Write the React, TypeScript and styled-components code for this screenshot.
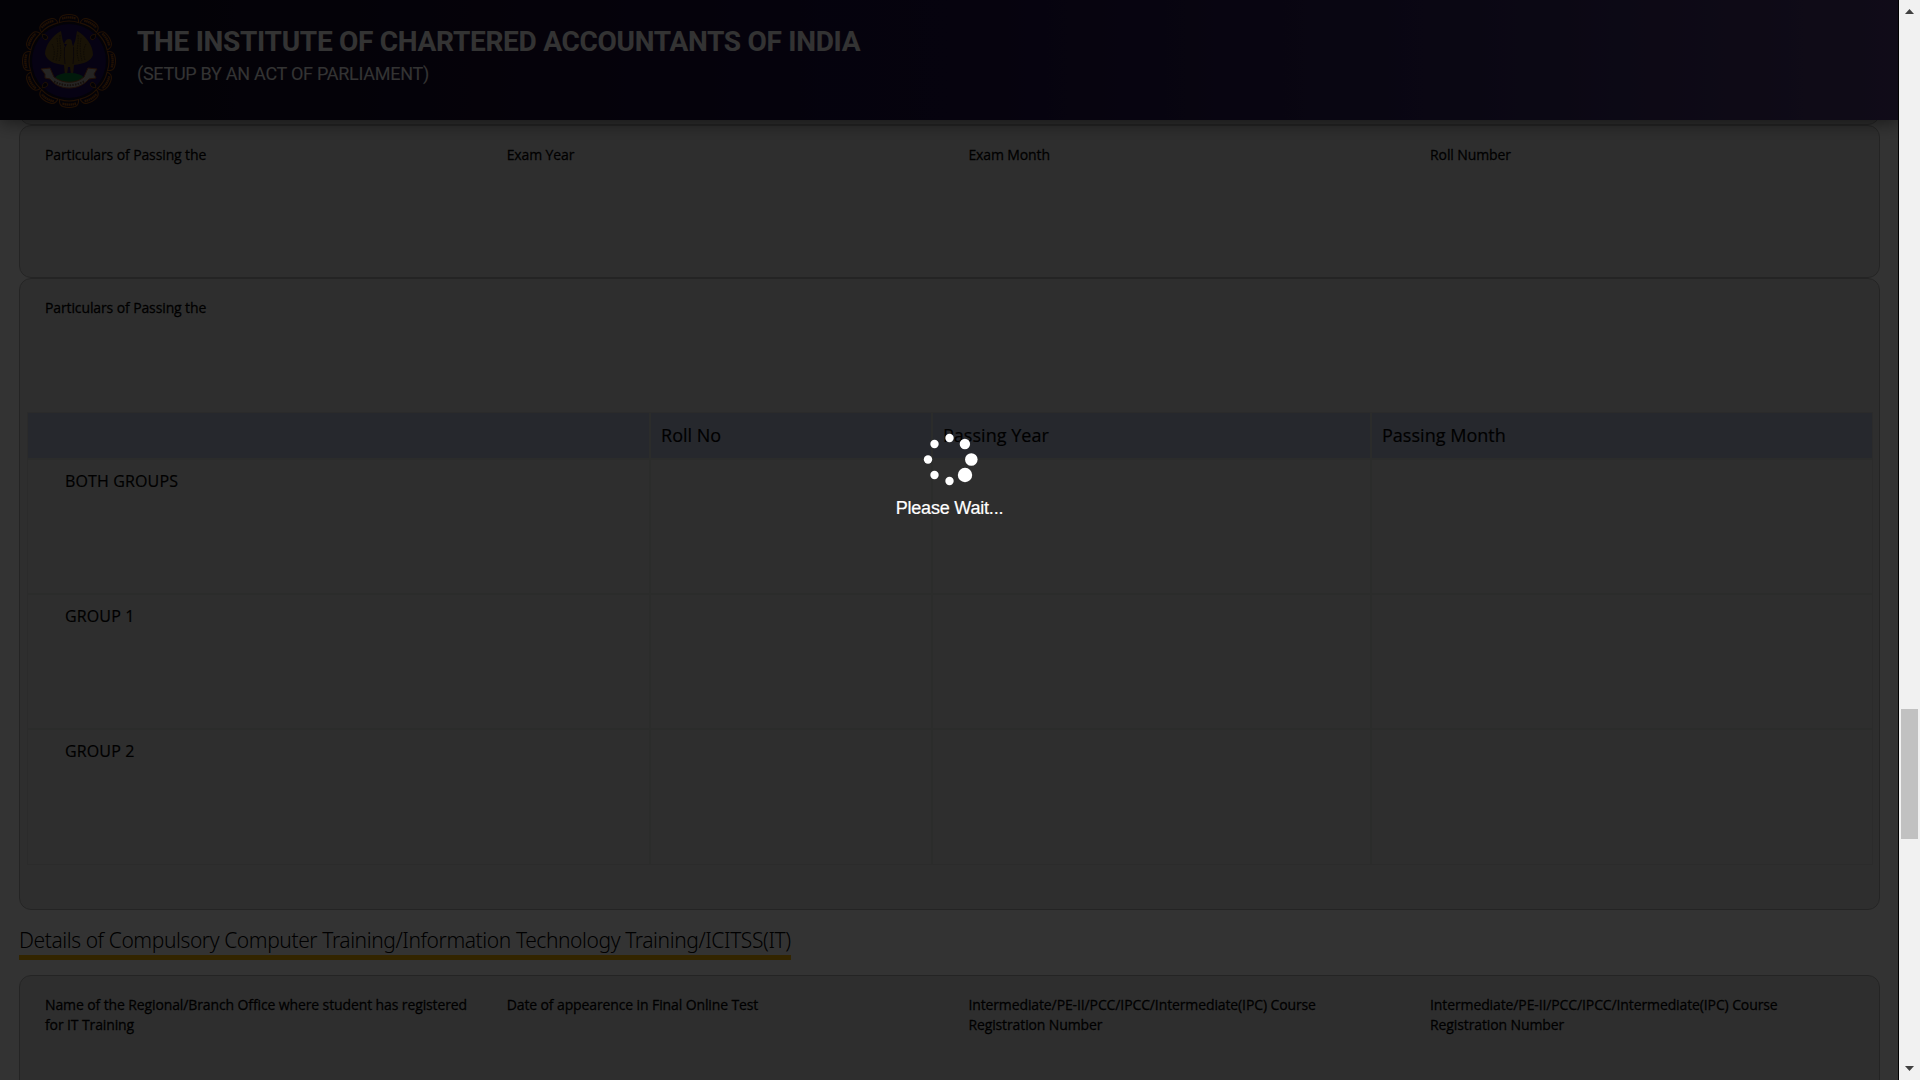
import React from "react";
import styled, { createGlobalStyle } from "styled-components";

const Global = createGlobalStyle`
  *{box-sizing:border-box}
  body{margin:0;background:#fff;overflow:hidden;font-family:"Open Sans","Noto Sans",sans-serif;color:#000}
`;
const Screen = styled.div`display:flex;width:1920px;height:1080px;overflow:hidden;`;
const Page = styled.div`position:relative;width:1899px;height:1080px;overflow:hidden;background:#fff;display:flex;flex-direction:column;border-right:1px solid #000;`;
const Header = styled.header`flex:none;z-index:1;width:1899px;height:120px;padding:13px 21px;display:flex;gap:20px;
  background:linear-gradient(90deg,#0f0a20 0%,#190c30 25%,#1e0f46 50%,#32235f 75%,#503c78 100%);box-shadow:0 2px 18px rgba(0,0,0,.55);`;
const Titles = styled.div`font-family:Roboto,sans-serif;color:#fff;padding-top:13px;`;
const Title = styled.h1`margin:0;font-size:28px;line-height:32px;font-weight:700;white-space:nowrap;letter-spacing:-.285px;`;
const Sub = styled.div`margin-top:5px;font-size:18px;line-height:22px;white-space:nowrap;letter-spacing:-.27px;`;
const Content = styled.main`padding:0 19px;flex:none;`;
const Card = styled.section<{ $h: number }>`height:${p => p.$h}px;border:1px solid #b4b4b4;border-radius:12px;background:#e6e6e6;padding:19px 7px 0;width:1861px;`;
const PreviousCard = styled(Card)`margin-top:-35px;`;
const Fields = styled.div<{ $h?: number }>`display:grid;grid-template-columns:repeat(4,461.7px);padding-left:18px;height:${p => p.$h ?? 60}px;`;
const Label = styled.div`font-size:14px;line-height:20px;letter-spacing:-.115px;-webkit-text-stroke:.28px #000;padding-right:36px;`;
const Table = styled.div`border:1px solid #d4d6d4;width:1846px;`;
const Row = styled.div<{ $head?: boolean }>`display:grid;grid-template-columns:623px 282px 439px 1fr;height:${p => p.$head ? 47 : 135}px;
  background:${p => p.$head ? "#bec8e1" : "transparent"};border-bottom:2px solid #d8dad8;
  &:last-child{border-bottom:0;height:134px}`;
const Cell = styled.div<{ $head?: boolean }>`border-right:2px solid #d8dcd8;padding:${p => p.$head ? "9px 10px" : "9px 37px"};
  font-size:${p => p.$head ? 18 : 16}px;line-height:${p => p.$head ? 27 : 24}px;-webkit-text-stroke:.2px #000;letter-spacing:${p => p.$head ? 0.02 : 0.14}px;
  &:last-child{border-right:0}`;
const Heading = styled.h2`display:block;width:fit-content;margin:15px 0 15px;height:35px;font-family:"Noto Sans","Open Sans",sans-serif;font-size:21px;line-height:30px;font-weight:300;letter-spacing:-.42px;border-bottom:5px solid #ffbb00;white-space:nowrap;`;
const Overlay = styled.div`position:absolute;inset:0;width:1899px;z-index:5;background:rgba(0,0,0,.8);display:flex;flex-direction:column;align-items:center;padding-top:430px;`;
const Wait = styled.div`margin-top:9px;color:#fff;font:18px/26px "Liberation Sans",Arial,sans-serif;letter-spacing:-.2px;-webkit-text-stroke:.2px #fff;`;
const Bar = styled.aside`flex:1;background:#f1f1f1;display:flex;flex-direction:column;align-items:center;`;
const Arrow = styled.svg`display:block;width:21px;height:21px;flex:none;`;
const Thumb = styled.div`width:17px;height:130px;margin-top:688px;margin-bottom:auto;background:#c1c1c1;`;

function Emblem() {
  const petals = Array.from({ length: 12 }, (_, i) => i * 30);
  return (
    <svg width="96" height="96" viewBox="0 0 96 96">
      <circle cx="48" cy="48" r="37" fill="#1e0a5f" />
      {petals.map(a => (
        <g key={a} transform={`rotate(${a} 48 48)`} fill="none" stroke="#a0500f">
          <path d="M38.5 9.5Q38 4 42 2.5Q48 .5 54 2.5Q58 4 57.5 9.5Q48 6.5 38.5 9.5Z" strokeWidth="1.1" />
          <path d="M41 5.5Q48 3.2 55 5.5" strokeWidth="2.4" strokeDasharray="1.6 .4" />
        </g>
      ))}
      {[45, 135, 225, 315].map(a => (
        <path key={a} transform={`rotate(${a} 48 48)`} d="M48 10q-3 3-2 6q2 2 4 0q1-3-2-6z" fill="#0d061a" stroke="#96500f" strokeWidth=".9" />
      ))}
      <g fill="#785a1e">
        <path d="M40 18C32 22 24 32 24 41C26 48 33 51 43 52L44 34Q41 27 40 18Z" />
        <path d="M56 18C64 22 72 32 72 42C70 48 63 51 53 52L52 34Q55 27 56 18Z" />
        <path d="M44 29Q45 26 48 26Q51 26 51 30Q52 34 54 38L53 52L52 62H50L49 54H47L46 62H44L43 52L42 38L46 31L43 31Z" />
      </g>
      <path d="M39 22C38 33 42 38 38 48M57 22C58 33 54 38 58 48M31 31Q35 38 32 47M65 31Q61 38 64 47M36 25Q38 36 35 48M60 25Q58 36 61 48" fill="none" stroke="#3e2c18" strokeWidth="1" strokeDasharray="1.5 1" />
      <path d="M43.5 34Q43 44 44 51M52.5 34Q53 44 52 51" fill="none" stroke="#281837" strokeWidth=".8" />
      <ellipse cx="48.5" cy="65" rx="14" ry="5" fill="#08823a" />
      <path d="M20 56L29 55L33 64C42 71 55 71 63 64L67 55L76 56L73 61L75 65L68 66C58 78 38 78 29 66L24 65L24 61Z" fill="#b8b4b0" stroke="#a05023" />
      <path d="M33 68.5Q48 76 63 68.5" fill="none" stroke="#6e5040" strokeWidth="2" strokeDasharray="1.5 1.2" />
    </svg>
  );
}

function Spinner() {
  const dots = [[24.5, 8, 4.2], [39.9, 14, 5.2], [46.3, 29.5, 6.3], [40, 45, 7.2], [24.5, 51, 4.2], [9.5, 45, 4.2], [3, 29.5, 4.2], [9.5, 14, 4.2]];
  return (
    <svg width="60" height="56" viewBox="-5 0 60 56">
      {dots.map(([x, y, r]) => <circle key={`${x}-${y}`} cx={x} cy={y} r={r} fill="#fff" />)}
    </svg>
  );
}

export default function App() {
  return (
    <Screen>
      <Global />
      <Page>
        <Header>
          <Emblem />
          <Titles>
            <Title>THE INSTITUTE OF CHARTERED ACCOUNTANTS OF INDIA</Title>
            <Sub>(SETUP BY AN ACT OF PARLIAMENT)</Sub>
          </Titles>
        </Header>
        <Content>
          <PreviousCard $h={40} />
          <Card $h={153}>
            <Fields>
              <Label>Particulars of Passing the</Label><Label>Exam Year</Label><Label>Exam Month</Label><Label>Roll Number</Label>
            </Fields>
          </Card>
          <Card $h={632}>
            <Fields $h={114}><Label>Particulars of Passing the</Label></Fields>
            <Table>
              <Row $head><Cell $head /><Cell $head>Roll No</Cell><Cell $head>Passing Year</Cell><Cell $head>Passing Month</Cell></Row>
              {["BOTH GROUPS", "GROUP 1", "GROUP 2"].map(g => <Row key={g}><Cell>{g}</Cell><Cell /><Cell /><Cell /></Row>)}
            </Table>
          </Card>
          <Heading>Details of Compulsory Computer Training/Information Technology Training/ICITSS(IT)</Heading>
          <Card $h={200}>
            <Fields>
              <Label>Name of the Regional/Branch Office where student has registered for IT Training</Label>
              <Label>Date of appearence in Final Online Test</Label>
              <Label>Intermediate/PE-II/PCC/IPCC/Intermediate(IPC) Course Registration Number</Label>
              <Label>Intermediate/PE-II/PCC/IPCC/Intermediate(IPC) Course Registration Number</Label>
            </Fields>
          </Card>
        </Content>
        <Overlay><Spinner /><Wait>Please Wait...</Wait></Overlay>
      </Page>
      <Bar>
        <Arrow viewBox="0 0 21 21"><path d="M6 14h9l-4.5-5z" fill="#404040" /></Arrow>
        <Thumb />
        <Arrow viewBox="0 0 21 21"><path d="M6 7h9l-4.5 5z" fill="#404040" /></Arrow>
      </Bar>
    </Screen>
  );
}
